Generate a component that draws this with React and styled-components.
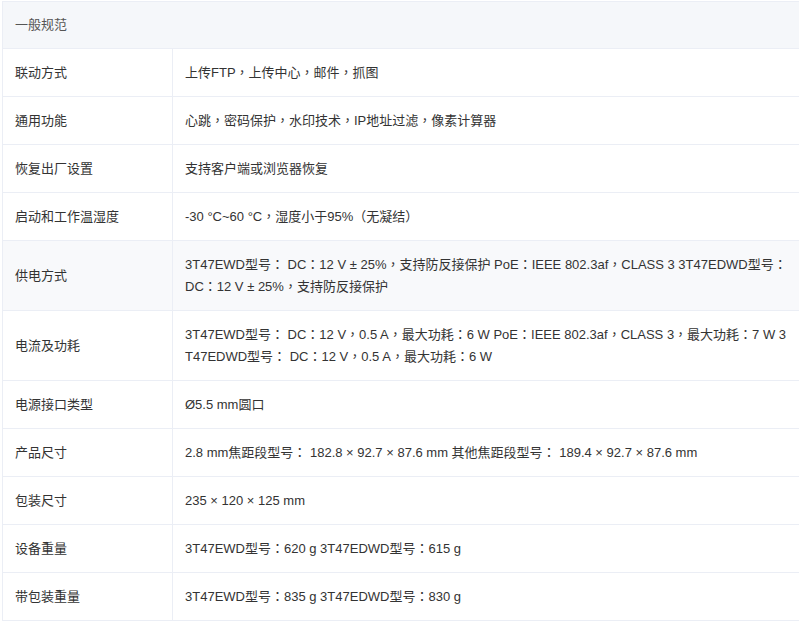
import React from "react";
import styled, { createGlobalStyle } from "styled-components";

const Global = createGlobalStyle`
  body { margin: 0; background: #fff; font-family: "Liberation Sans", "Noto Sans CJK TC", sans-serif; }
`;

const Table = styled.div`
  margin: 1px 0 0 2px;
  width: 810px;
  border-top: 1px solid #ebeef5;
  border-left: 1px solid #ebeef5;
  font-size: 13px;
  color: #333;
`;

const Head = styled.div`
  background: #f5f7fa;
  height: 46px;
  line-height: 46px;
  padding-left: 12px;
  color: #555;
  border-bottom: 1px solid #ebeef5;
`;

const Row = styled.div`
  display: grid;
  grid-template-columns: 169px 1fr;
  border-bottom: 1px solid #ebeef5;
  background: ${(p) => (p.$hover ? "#f8f9fb" : "#fff")};
`;

const Cell = styled.div`
  padding: 13px 12px 12px 12px;
  line-height: 22px;
  display: flex;
  align-items: center;
  & + & {
    border-left: 1px solid #ebeef5;
    padding-right: 26px;
    word-break: break-all;
  }
`;

const rows = [
  ["联动方式", "上传FTP，上传中心，邮件，抓图"],
  ["通用功能", "心跳，密码保护，水印技术，IP地址过滤，像素计算器"],
  ["恢复出厂设置", "支持客户端或浏览器恢复"],
  ["启动和工作温湿度", "-30 °C~60 °C，湿度小于95%（无凝结）"],
  ["供电方式", "3T47EWD型号： DC：12 V ± 25%，支持防反接保护 PoE：IEEE 802.3af，CLASS 3 3T47EDWD型号： DC：12 V ± 25%，支持防反接保护", true],
  ["电流及功耗", "3T47EWD型号： DC：12 V，0.5 A，最大功耗：6 W PoE：IEEE 802.3af，CLASS 3，最大功耗：7 W 3T47EDWD型号： DC：12 V，0.5 A，最大功耗：6 W"],
  ["电源接口类型", "Ø5.5 mm圆口"],
  ["产品尺寸", "2.8 mm焦距段型号： 182.8 × 92.7 × 87.6 mm 其他焦距段型号： 189.4 × 92.7 × 87.6 mm"],
  ["包装尺寸", "235 × 120 × 125 mm"],
  ["设备重量", "3T47EWD型号：620 g 3T47EDWD型号：615 g"],
  ["带包装重量", "3T47EWD型号：835 g 3T47EDWD型号：830 g"],
];

export default function App() {
  return (
    <>
      <Global />
      <Table>
        <Head>一般规范</Head>
        {rows.map(([k, v, h]) => (
          <Row key={k} $hover={h}>
            <Cell>{k}</Cell>
            <Cell>{v}</Cell>
          </Row>
        ))}
      </Table>
    </>
  );
}
